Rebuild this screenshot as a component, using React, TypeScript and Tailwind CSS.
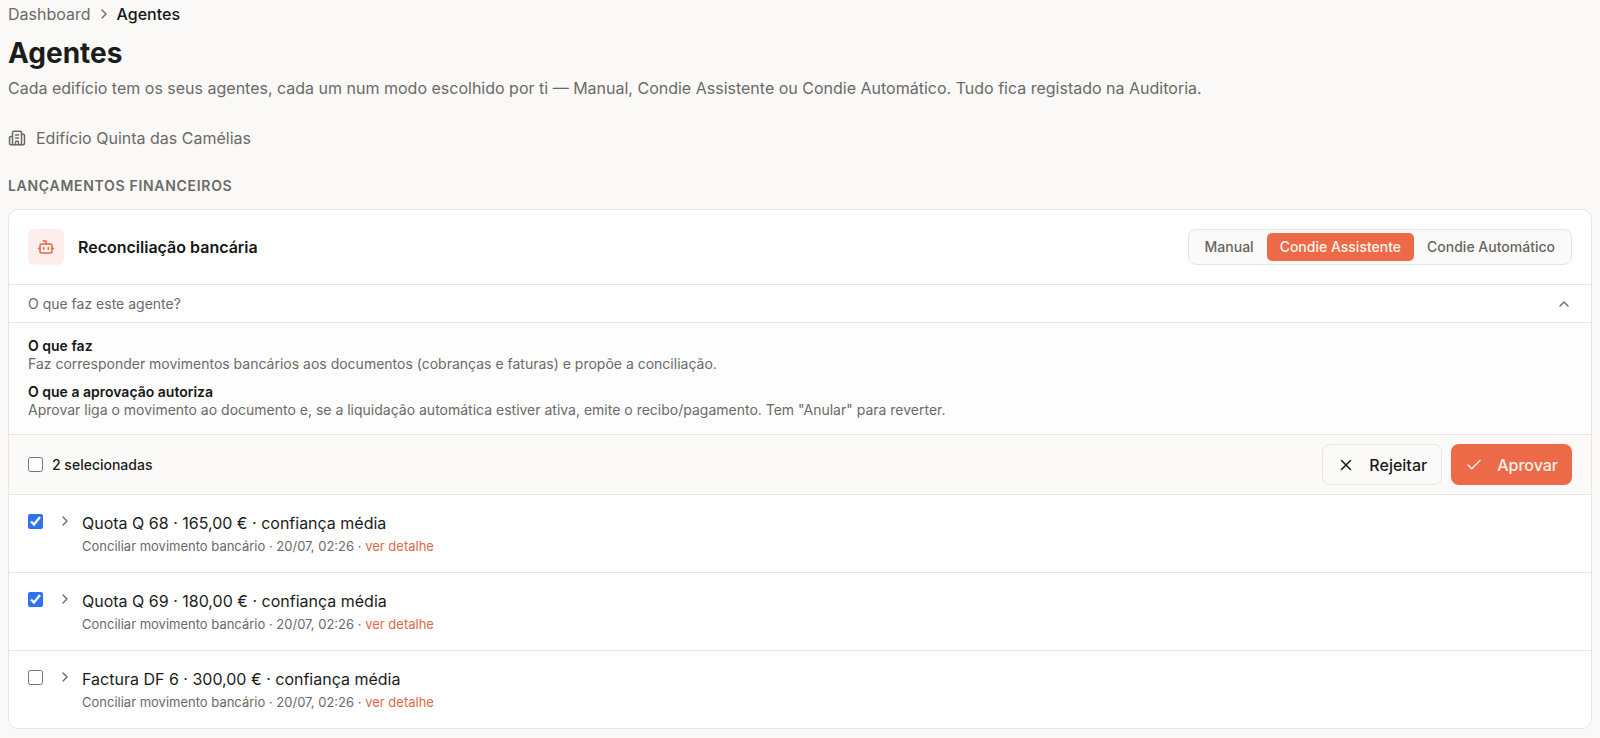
import { useState } from "react";
import { Bot, Building2, Check, ChevronRight, ChevronUp, X } from "lucide-react";
import clsx from "clsx";

type Proposal = { id: string; title: string; meta: string };

const MODES = ["Manual", "Condie Assistente", "Condie Automático"];

const PROPOSALS: Proposal[] = [
  { id: "q68", title: "Quota Q 68 · 165,00 € · confiança média", meta: "Conciliar movimento bancário · 20/07, 02:26" },
  { id: "q69", title: "Quota Q 69 · 180,00 € · confiança média", meta: "Conciliar movimento bancário · 20/07, 02:26" },
  { id: "df6", title: "Factura DF 6 · 300,00 € · confiança média", meta: "Conciliar movimento bancário · 20/07, 02:26" },
];

function Checkbox({ id, label, checked, onChange }: { id: string; label?: string; checked: boolean; onChange: () => void }) {
  return (
    <input
      id={id}
      type="checkbox"
      aria-label={label}
      checked={checked}
      onChange={onChange}
      className="h-[15px] w-[15px] shrink-0 accent-[#2f72ee]"
    />
  );
}

function ModeSwitch() {
  const [mode, setMode] = useState("Condie Assistente");

  return (
    <div role="group" aria-label="Modo" className="flex rounded-lg border border-[#e6e4df] bg-[#fbfaf9] p-[3px]">
      {MODES.map((item) => (
        <button
          key={item}
          type="button"
          aria-pressed={mode === item}
          onClick={() => setMode(item)}
          className={clsx(
            "rounded-[5px] px-[13px] text-sm leading-7 font-medium",
            mode === item ? "bg-[#ec6a47] text-[#fff4ee]" : "text-[#666562]"
          )}
        >
          {item}
        </button>
      ))}
    </div>
  );
}

function AgentInfo() {
  const [open, setOpen] = useState(true);

  return (
    <>
      <button
        type="button"
        aria-expanded={open}
        onClick={() => setOpen(!open)}
        className="flex w-full items-center justify-between border-t border-[#e6e5e2] px-[19px] py-2 text-left text-sm leading-[21px] text-[#6b6a67]"
      >
        O que faz este agente?
        <ChevronUp size={16} strokeWidth={2} className={clsx(!open && "rotate-180")} />
      </button>
      {open && (
        <dl className="border-t border-[#e6e5e2] bg-[#fdfdfd] px-[19px] pt-[14px] pb-[15px] text-sm leading-[18px]">
          <dt className="font-semibold text-[#171717]">O que faz</dt>
          <dd className="text-[#6b6a67]">
            Faz corresponder movimentos bancários aos documentos (cobranças e faturas) e propõe a conciliação.
          </dd>
          <dt className="mt-[10px] font-semibold text-[#171717]">O que a aprovação autoriza</dt>
          <dd className="text-[#6b6a67]">
            Aprovar liga o movimento ao documento e, se a liquidação automática estiver ativa, emite o recibo/pagamento. Tem
            "Anular" para reverter.
          </dd>
        </dl>
      )}
    </>
  );
}

function ProposalRow({ proposal, checked, onToggle }: { proposal: Proposal; checked: boolean; onToggle: () => void }) {
  return (
    <li className="flex items-start border-t border-[#e6e5e2] px-[19px] pt-4 pb-[15px]">
      <div className="flex h-5 items-center">
        <Checkbox id={proposal.id} label={proposal.title} checked={checked} onChange={onToggle} />
        <button type="button" aria-label="Expandir" className="ml-[14px] text-[#6b6a67]">
          <ChevronRight size={16} strokeWidth={2} />
        </button>
      </div>
      <div className="ml-[9px]">
        <p className="text-base leading-6 text-[#1c1c1b]">{proposal.title}</p>
        <p className="text-[13px] leading-[22px] text-[#6b6a67]">
          {proposal.meta} ·{" "}
          <a href="#" className="text-[#e0694a]">
            ver detalhe
          </a>
        </p>
      </div>
    </li>
  );
}

function AgentCard() {
  const [selected, setSelected] = useState<string[]>(["q68", "q69"]);
  const allSelected = selected.length === PROPOSALS.length;

  const toggle = (id: string) =>
    setSelected((prev) => (prev.includes(id) ? prev.filter((x) => x !== id) : [...prev, id]));

  return (
    <section className="mt-[13px] overflow-hidden rounded-[10px] border border-[#e6e5e2] bg-white">
      <div className="flex items-center justify-between px-[19px] py-[19px]">
        <div className="flex items-center gap-[14px]">
          <span className="flex h-9 w-9 items-center justify-center rounded-md bg-[#fdeeeb] text-[#e0694a]">
            <Bot size={18} strokeWidth={2} />
          </span>
          <h3 className="text-base font-semibold text-[#171717]">Reconciliação bancária</h3>
        </div>
        <ModeSwitch />
      </div>

      <AgentInfo />

      <div className="flex items-center justify-between border-t border-[#e6e5e2] bg-[#fbfaf8] px-[19px] py-[9px]">
        <div className="flex items-center gap-[9px]">
          <Checkbox
            id="select-all"
            checked={allSelected}
            onChange={() => setSelected(allSelected ? [] : PROPOSALS.map((p) => p.id))}
          />
          <label htmlFor="select-all" className="text-sm font-medium text-[#1c1c1b]">
            {selected.length} selecionadas
          </label>
        </div>
        <div className="flex gap-[9px]">
          <button
            type="button"
            className="flex h-[41px] items-center gap-[14px] rounded-lg border border-[#e6e5e2] bg-[#fbfaf9] px-[14px] font-medium text-[#1c1c1b]"
          >
            <X size={18} strokeWidth={2} />
            Rejeitar
          </button>
          <button
            type="button"
            className="flex h-[41px] items-center gap-[14px] rounded-lg bg-[#ec6a47] px-[14px] font-medium text-[#fff1ea]"
          >
            <Check size={18} strokeWidth={2} />
            Aprovar
          </button>
        </div>
      </div>

      <ul>
        {PROPOSALS.map((proposal) => (
          <ProposalRow
            key={proposal.id}
            proposal={proposal}
            checked={selected.includes(proposal.id)}
            onToggle={() => toggle(proposal.id)}
          />
        ))}
      </ul>
    </section>
  );
}

export default function App() {
  return (
    <main className="min-h-screen bg-[#faf9f7] px-2 pt-0.5 pb-2 font-['Inter',sans-serif] text-base text-[#171717]">
      <nav aria-label="Breadcrumb" className="flex items-center gap-[5px] leading-6">
        <a href="#" className="text-[#6b6a67]">
          Dashboard
        </a>
        <ChevronRight size={16} strokeWidth={2} className="text-[#6b6a67]" />
        <span className="font-medium">Agentes</span>
      </nav>
      <h1 className="mt-[9px] text-[28px] leading-9 font-bold text-[#1c1c1b]">Agentes</h1>
      <p className="mt-[5px] leading-6 text-[#6b6a67]">
        Cada edifício tem os seus agentes, cada um num modo escolhido por ti — Manual, Condie Assistente ou Condie
        Automático. Tudo fica registado na Auditoria.
      </p>

      <div className="mt-[26px] flex items-center gap-[10px] leading-6 text-[#6b6a67]">
        <Building2 size={18} strokeWidth={2} />
        Edifício Quinta das Camélias
      </div>

      <h2 className="mt-[26px] text-sm font-semibold tracking-wider text-[#6b6a67] uppercase">Lançamentos financeiros</h2>
      <AgentCard />
    </main>
  );
}
